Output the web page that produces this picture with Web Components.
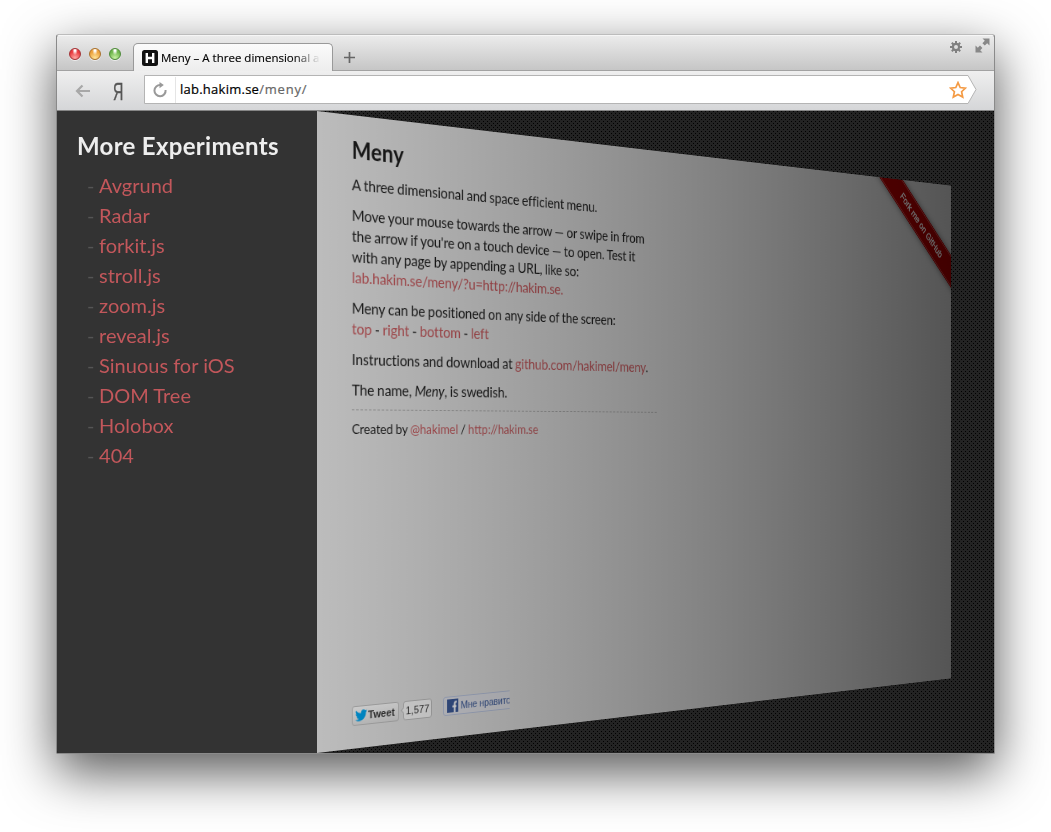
<!DOCTYPE html>
<html lang="en"><head><meta charset="utf-8"><title>Meny</title>
<style>
html,body{margin:0;height:100%;background:#fff;overflow:hidden}
body{font-family:Lato,"Open Sans",sans-serif;padding:34px 0 0 56px;box-sizing:border-box}
</style></head><body>
<app-window>
  <tab-bar slot="chrome">Meny – A three dimensional and space efficient menu</tab-bar>
  <address-bar slot="chrome"><span>lab.hakim.se</span><span slot="path">/meny/</span></address-bar>
  <meny-stage>
    <meny-list slot="menu" heading="More Experiments" items="Avgrund|Radar|forkit.js|stroll.js|zoom.js|reveal.js|Sinuous for iOS|DOM Tree|Holobox|404"></meny-list>
    <meny-article></meny-article>
    <share-row></share-row>
    <fork-ribbon slot="ribbon">Fork me on GitHub</fork-ribbon>
  </meny-stage>
</app-window>
<script>
const define=(name,html)=>customElements.define(name,class extends HTMLElement{
  constructor(){super();this.attachShadow({mode:'open'}).innerHTML=html;}
});
define('app-window',`<style>
:host{display:block;width:937px;height:718px;border:1px solid #8a8a8a;border-top-color:#bcbcbc;border-radius:3px 3px 2px 2px;box-shadow:0 18px 52px rgba(0,0,0,.67);background:#222}
.f{display:flex;flex-direction:column;height:100%;overflow:hidden;border-radius:2px}
</style><div class="f"><slot name="chrome"></slot><slot></slot></div>`);
define('tab-bar',`<style>
:host{display:flex;height:36px;flex:none;box-sizing:border-box;background:linear-gradient(#ececec,#c6c6c6);border-bottom:1px solid #a2a2a2;box-shadow:inset 0 1px #f6f6f6;align-items:flex-end;font:11.5px "Open Sans",sans-serif;color:#000}
.l{display:flex;gap:8px;padding:0 12px 10px 12px;align-self:flex-end}
.l i{width:12px;height:12px;box-sizing:border-box;border-radius:50%;border:1px solid;box-shadow:0 1px rgba(255,255,255,.6)}
.r{background:radial-gradient(ellipse at 50% 15%,#fff 0 8%,transparent 38%),radial-gradient(circle at 50% 90%,#ffaaa5,#e8393d 65%);border-color:#a33336!important}
.y{background:radial-gradient(ellipse at 50% 15%,#fff 0 8%,transparent 38%),radial-gradient(circle at 50% 90%,#ffe59a,#eca03a 65%);border-color:#a9712c!important}
.g{background:radial-gradient(ellipse at 50% 15%,#fff 0 8%,transparent 38%),radial-gradient(circle at 50% 90%,#c9f3a5,#6eb54b 65%);border-color:#4d8a39!important}
.t{width:200px;height:28px;margin-bottom:-1px;box-sizing:border-box;border:1px solid #999;border-bottom:0;border-radius:5px 5px 0 0;background:linear-gradient(#fbfbfb,#ededed);display:flex;align-items:center;gap:3px;padding:1px 10px 0 8px;position:relative}
.n{flex:1;overflow:hidden;white-space:nowrap;-webkit-mask:linear-gradient(90deg,#000 82%,transparent 99%);mask:linear-gradient(90deg,#000 82%,transparent 99%);line-height:16px;-webkit-text-stroke:.15px #000}
svg{flex:none;display:block}.p{margin:0 0 7px 11px}.s{flex:1}.gear{margin:0 12px 16px 0}.ex{margin:0 4px 17px 0}
</style>
<div class="l"><i class="r"></i><i class="y"></i><i class="g"></i></div>
<div class="t"><svg width="16" height="16"><rect width="16" height="16" rx="2.5" fill="#111"/><path d="M4.8 3v10M11.2 3v10M4 8h8" stroke="#fff" stroke-width="2.4" fill="none"/></svg><div class="n"><slot></slot></div></div>
<svg class="p" width="11" height="11"><path d="M5.5 0v11M0 5.5h11" stroke="#666" stroke-width="1.7"/></svg><div class="s"></div>
<svg class="gear" width="14" height="14" viewBox="-7 -7 14 14"><circle r="3.1" fill="none" stroke="#808080" stroke-width="2.2"/><g stroke="#808080" stroke-width="2"><path d="M0-6v2.4M0 6V3.6M-6 0h2.4M6 0H3.6M-4.2-4.2l1.7 1.7M4.2 4.2L2.5 2.5M-4.2 4.2l1.7-1.7M4.2-4.2L2.500-2.500"/></g></svg>
<svg class="ex" width="15" height="15" viewBox="0 0 15 15"><path d="M7.500.5h7v7l-2.300-2.300-2.400 2.400-2.400-2.400 2.400-2.400zM.5 14.500v-7l2.300 2.300 2.200-2.200 2.400 2.400-2.200 2.200 2.300 2.300z" fill="#888"/></svg>`);
define('address-bar',`<style>
:host{display:flex;height:40px;flex:none;box-sizing:border-box;background:linear-gradient(#efefef,#d5d6d8);border-bottom:1px solid #868686;align-items:flex-start;padding:4px 17px 0 18px;font:13px "Open Sans",sans-serif;color:#000}
svg{display:block;flex:none}.b{margin:9px 0 0 0}.y{font:23px/30px "Liberation Sans",sans-serif;color:#555;-webkit-text-stroke:.4px #555;transform:scaleX(.62);width:16px;margin:2px 18px 0 19px}
.f{flex:1;height:29px;position:relative;display:flex;align-items:center}
.bg{position:absolute;inset:0}
.f>*{z-index:1}.bg{z-index:0!important}.rl{margin-left:8px}.d{width:1px;height:26px;background:#e5e5e5;margin:0 4px 0 7px}
.u{flex:1;line-height:18px;padding-bottom:1px;letter-spacing:.25px;-webkit-text-stroke:.2px}.pa{color:#666;letter-spacing:.8px}.st{margin-right:10px}
</style>
<svg class="b" width="16" height="14"><path d="M15 7H2M7.500 1.500L2 7l5.500 5.500" stroke="#a8a8a8" stroke-width="2.2" fill="none"/></svg>
<span class="y">Я</span>
<div class="f"><svg class="bg" width="833" height="29"><path d="M.5.5h823.500l8 14-8 14H.5z" fill="#fff" stroke="#b4b4b4"/></svg>
<svg class="rl" width="16" height="16"><path d="M8.500 3A5.600 5.600 0 1 0 13.600 8" fill="none" stroke="#999" stroke-width="2"/><path d="M7.500 0v6.200l4.300-3.100z" fill="#999"/></svg><i class="d"></i>
<span class="u"><slot></slot><span class="pa"><slot name="path"></slot></span></span>
<svg class="st" width="18" height="18" viewBox="0 0 18 18"><path d="M9 1.600l2.200 4.900 5.300.6-3.900 3.600 1.100 5.300L9 13.400 4.300 16l1.100-5.300L1.500 7.100l5.300-.6z" fill="#fff" stroke="#f49b45" stroke-width="1.700"/></svg></div>`);
define('meny-stage',`<style>
:host{display:block;height:642px;flex:none;position:relative;overflow:hidden;perspective:800px;perspective-origin:0 50%;background-color:#232323;background-image:conic-gradient(from 270deg at 1px 1px,#000 25%,transparent 0),conic-gradient(from 270deg at 1px 1px,#000 25%,transparent 0);background-size:4px 4px;background-position:0 0,2px 2px}
.m{position:absolute;left:0;top:0;width:260px;height:100%;background:#333}
.c{position:absolute;inset:0;overflow:hidden;outline:1px solid transparent;will-change:transform;transform-origin:0 50%;transform:translateX(260px) rotateY(15deg);background:#ddd;padding:20px 40px;box-sizing:border-box;display:flex;flex-direction:column;justify-content:space-between}
.v{position:absolute;inset:0;background:linear-gradient(90deg,rgba(0,0,0,.15),rgba(0,0,0,.62))}
</style><div class="c"><slot></slot><slot name="ribbon"></slot><div class="v"></div></div><div class="m"><slot name="menu"></slot></div>`);
customElements.define('meny-list',class extends HTMLElement{connectedCallback(){
this.attachShadow({mode:'open'}).innerHTML=`<style>
:host{display:block;padding:20px;color:#eee}
h2{font-size:24px;line-height:30px;margin:0 0 9px;font-weight:700;white-space:nowrap;letter-spacing:.3px}
ul{list-style:none;margin:0;padding:0 0 0 10px}li{font-size:20px;line-height:30px;color:#555;display:flex;gap:4.6px}a{color:#c2575b}
</style><h2>${this.getAttribute('heading')}</h2><ul>${this.getAttribute('items').split('|').map(t=>`<li><span>-</span><a>${t}</a></li>`).join('')}</ul>`}});
define('meny-article',`<style>
:host{display:block;width:400px;font-size:16px;line-height:21px;color:#1c1c1c;letter-spacing:-.14px;word-spacing:-.35px}
h1{font-size:24px;line-height:34px;margin:-2px 0 7px;font-weight:700;letter-spacing:.2px}p{margin:0 0 10px}a{color:#c2575b}
small{display:block;border-top:1px dashed #aaa;padding-top:8px;font-size:14px;letter-spacing:0}
</style><h1>Meny</h1><p>A three dimensional and space efficient menu.</p>
<p>Move your mouse towards the arrow — or swipe in from the arrow if you're on a touch device — to open. Test it with any page by appending a URL, like so:<br><a>lab.hakim.se/meny/?u=http://hakim.se.</a></p>
<p>Meny can be positioned on any side of the screen:<br><a>top</a> - <a>right</a> - <a>bottom</a> - <a>left</a></p>
<p>Instructions and download at <a>github.com/hakimel/meny</a>.</p>
<p>The name, <em>Meny</em>, is swedish.</p>
<small>Created by <a>@hakimel</a> / <a>http://hakim.se</a></small>`);
define('share-row',`<style>
:host{display:flex;font:11px "Liberation Sans",sans-serif;align-items:center;width:195px;overflow:hidden;padding-bottom:3px}
div{box-sizing:border-box;height:20px;display:flex;align-items:center;border:1px solid #bbb;border-radius:3px;white-space:nowrap;flex:none}
.t{width:56px;font-weight:700;font-size:11.5px;color:#333;background:linear-gradient(#f4f4f4,#dadada);padding-left:3px;gap:1px}
.c{width:35px;margin-left:5px;background:#f4f4f4;font-size:11.5px;justify-content:center;color:#333;position:relative}
.c:before{content:"";position:absolute;width:4px;height:4px;left:-3px;top:6px;background:#f4f4f4;border:solid #bbb;border-width:0 0 1px 1px;transform:rotate(45deg)}
.f{margin-left:14px;width:110px;border-color:#b8c3dd;background:#dfe0e6;color:#3b5998;padding-left:4px;gap:3px;letter-spacing:-.1px}
</style><div class="t"><svg width="14" height="12" viewBox="0 0 24 20"><path d="M24 2.400c-.9.400-1.800.700-2.800.8 1-.6 1.800-1.600 2.200-2.700-1 .6-2 1-3.100 1.200A4.900 4.900 0 0 0 11.900 6.200C7.800 6 4.200 4 1.700 1c-1.300 2.200-.7 5.100 1.500 6.600-.8 0-1.600-.2-2.200-.6 0 2.300 1.600 4.400 3.900 4.900-.7.200-1.500.2-2.200.1.600 2 2.400 3.400 4.600 3.400A10 10 0 0 1 0 17.500 14 14 0 0 0 7.500 19.700c9.100 0 14.300-7.700 14-14.600 1-.7 1.800-1.600 2.500-2.700z" fill="#00a0e8"/></svg>Tweet</div><div class="c">1,577</div>
<div class="f"><svg width="14" height="14"><rect width="14" height="14" fill="#3b5998"/><path d="M12 3.200h-1.200q-1.300 0-1.300 1.300V14M6.500 7.800h5" stroke="#fff" stroke-width="2" fill="none"/></svg>Мне нравится</div>`);
define('fork-ribbon',`<style>
:host{position:absolute;right:0;top:0;width:149px;height:149px;overflow:hidden}
div{position:absolute;left:-17px;top:41px;width:220px;height:30px;box-sizing:border-box;background:#a00;transform:rotate(45deg);text-align:center;font:12.500px/26px "Liberation Sans",sans-serif;color:#fff;-webkit-text-stroke:.4px #fff;box-shadow:0 0 10px rgba(0,0,0,.5);border:solid #a00;border-width:2px 0;outline:1px solid #c55;outline-offset:-2px}
</style><div><slot></slot></div>`);
</script></body></html>
